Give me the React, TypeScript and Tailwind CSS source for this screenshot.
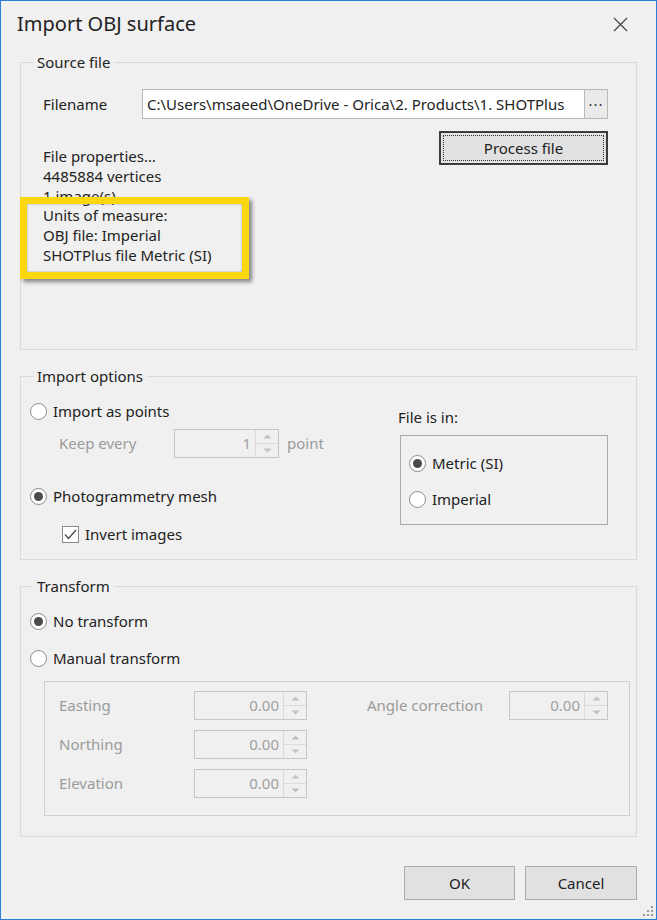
import React from "react";

const Radio = ({ checked }: { checked?: boolean }): React.ReactElement => (
  <span className="w-[17px] h-[17px] rounded-full border border-[#8b8b8b] bg-white flex items-center justify-center shrink-0">
    {checked ? <span className="w-[9px] h-[9px] rounded-full bg-[#4a4a4a]" /> : null}
  </span>
);

const RadioRow = ({ label, checked }: { label: string; checked?: boolean }): React.ReactElement => (
  <div className="flex items-center h-[20px] gap-[6px]">
    <Radio checked={checked} />
    <span>{label}</span>
  </div>
);

const Arrow = ({ up }: { up?: boolean }): React.ReactElement => (
  <svg width="9" height="5" viewBox="0 0 9 5">
    {up ? <path d="M0.5 4.5 L4.5 0.5 L8.5 4.5 Z" fill="#c2c2c2" /> : <path d="M0.5 0.5 L4.5 4.5 L8.5 0.5 Z" fill="#c2c2c2" />}
  </svg>
);

const Spinner = ({ value, className }: { value: string; className: string }): React.ReactElement => (
  <div className={`flex h-[29px] border border-[#c6c6c6] bg-[#f0f0f0] ${className}`}>
    <span className="flex-1 text-right pr-[4px] leading-[27px] text-[#a0a0a0]">{value}</span>
    <div className="w-[23px] border-l border-[#dadada] flex flex-col">
      <div className="flex-1 flex items-center justify-center border-b border-[#dadada]">
        <Arrow up />
      </div>
      <div className="flex-1 flex items-center justify-center">
        <Arrow />
      </div>
    </div>
  </div>
);

const Group = ({
  title,
  className,
  children,
}: {
  title: string;
  className: string;
  children: React.ReactNode;
}): React.ReactElement => (
  <fieldset className={`mx-[19px] border border-[#d9d9d9] p-0 ${className}`}>
    <legend className="ml-[12px] px-[4px] leading-[20px]">{title}</legend>
    {children}
  </fieldset>
);

const App = (): React.ReactElement => {
  return (
    <div className="w-[657px] h-[920px] relative overflow-hidden bg-[#f0f0f0] border border-[#2b7fd6] text-[15px] text-[#222] font-['Noto_Sans','Liberation_Sans',sans-serif]">
      <div className="flex justify-between h-[51px]">
        <h1 className="pl-[16px] pt-[9px] text-[20px] leading-[28px] text-[#222]">Import OBJ surface</h1>
        <svg className="mr-[28px] mt-[16px]" width="15" height="15" viewBox="0 0 15 15">
          <path d="M1 1 L14 14 M14 1 L1 14" stroke="#444" strokeWidth="1.2" />
        </svg>
      </div>

      <Group title="Source file" className="h-[298px]">
        <div className="pl-[22px] pr-[28px] pt-[17px]">
          <div className="flex items-center">
            <span className="w-[99px]">Filename</span>
            <div className="flex h-[30px] w-[466px] border border-[#b9b9b9] bg-white">
              <span className="flex-1 overflow-hidden whitespace-nowrap pl-[4px] leading-[28px]">
                C:\Users\msaeed\OneDrive - Orica\2. Products\1. SHOTPlus
              </span>
              <span className="w-[23px] shrink-0 border-l border-[#b9b9b9] bg-[#eaeaea] flex items-center justify-center leading-none tracking-[1px] text-[#333]">
                ···
              </span>
            </div>
          </div>
          <div className="flex justify-between mt-[12px]">
            <div className="pt-[16px] leading-[19.8px]">
              <div>File properties…</div>
              <div>4485884 vertices</div>
              <div>1 image(s)</div>
              <div>Units of measure:</div>
              <div>OBJ file: Imperial</div>
              <div>SHOTPlus file Metric (SI)</div>
            </div>
            <button className="w-[169px] h-[34px] border-2 border-[#3c3c3c] bg-[#e1e1e1] outline-1 outline-dotted outline-[#333] outline-offset-[-5px] text-[#222]">
              Process file
            </button>
          </div>
        </div>
      </Group>

      <Group title="Import options" className="h-[194px] mt-[16px]">
        <div className="flex pl-[9px]">
          <div className="w-[368px] pt-[15px]">
            <RadioRow label="Import as points" />
            <div className="flex items-center mt-[8px] pl-[29px] h-[29px] text-[#9b9b9b]">
              <span className="w-[115px]">Keep every</span>
              <Spinner value="1" className="w-[105px]" />
              <span className="ml-[8px]">point</span>
            </div>
            <div className="mt-[28px]">
              <RadioRow label="Photogrammetry mesh" checked />
            </div>
            <div className="flex items-center h-[20px] gap-[6px] mt-[18px] pl-[32px]">
              <span className="w-[17px] h-[17px] border border-[#8b8b8b] bg-white flex items-center justify-center">
                <svg width="13" height="11" viewBox="0 0 13 11">
                  <path d="M1 5.5 L4.5 9.5 L12 1" stroke="#4a4a4a" strokeWidth="1.3" fill="none" />
                </svg>
              </span>
              <span>Invert images</span>
            </div>
          </div>
          <div className="pt-[21px]">
            <div className="leading-[20px]">File is in:</div>
            <div className="mt-[8px] ml-[2px] w-[208px] h-[90px] border border-[#a9a9a9] pl-[8px] pt-[17px]">
              <RadioRow label="Metric (SI)" checked />
              <div className="mt-[16px]">
                <RadioRow label="Imperial" />
              </div>
            </div>
          </div>
        </div>
      </Group>

      <Group title="Transform" className="h-[261px] mt-[16px]">
        <div className="pl-[9px] pt-[15px]">
          <RadioRow label="No transform" checked />
          <div className="mt-[17px]">
            <RadioRow label="Manual transform" />
          </div>
          <div className="mt-[13px] ml-[14px] w-[586px] h-[135px] border border-[#d0d0d0] pl-[14px] pt-[9px] text-[#9b9b9b]">
            <div className="flex">
              <div className="flex flex-col gap-[10px]">
                <div className="flex items-center h-[29px]">
                  <span className="w-[135px]">Easting</span>
                  <Spinner value="0.00" className="w-[113px]" />
                </div>
                <div className="flex items-center h-[29px]">
                  <span className="w-[135px]">Northing</span>
                  <Spinner value="0.00" className="w-[113px]" />
                </div>
                <div className="flex items-center h-[29px]">
                  <span className="w-[135px]">Elevation</span>
                  <Spinner value="0.00" className="w-[113px]" />
                </div>
              </div>
              <div className="flex items-center h-[29px] ml-[60px]">
                <span className="w-[142px]">Angle correction</span>
                <Spinner value="0.00" className="w-[99px]" />
              </div>
            </div>
          </div>
        </div>
      </Group>

      <div className="flex justify-end gap-[10px] mt-[29px] mr-[19px]">
        <button className="w-[111px] h-[34px] border border-[#adadad] bg-[#e1e1e1] text-[#222]">OK</button>
        <button className="w-[112px] h-[34px] border border-[#adadad] bg-[#e1e1e1] text-[#222]">Cancel</button>
      </div>

      <div className="absolute left-[19px] top-[196px] w-[229px] h-[82px] border-[7px] border-[#fbd70f] shadow-[3px_3px_4px_rgba(0,0,0,0.45),inset_0_0_2px_rgba(0,0,0,0.4)]" />

      <svg className="absolute right-[2px] bottom-[2px]" width="11" height="11" viewBox="0 0 11 11">
        <rect x="8" y="0" width="2" height="2" fill="#9a9a9a" />
        <rect x="4" y="4" width="2" height="2" fill="#9a9a9a" />
        <rect x="8" y="4" width="2" height="2" fill="#9a9a9a" />
        <rect x="0" y="8" width="2" height="2" fill="#9a9a9a" />
        <rect x="4" y="8" width="2" height="2" fill="#9a9a9a" />
        <rect x="8" y="8" width="2" height="2" fill="#9a9a9a" />
      </svg>
    </div>
  );
};

export default App;
